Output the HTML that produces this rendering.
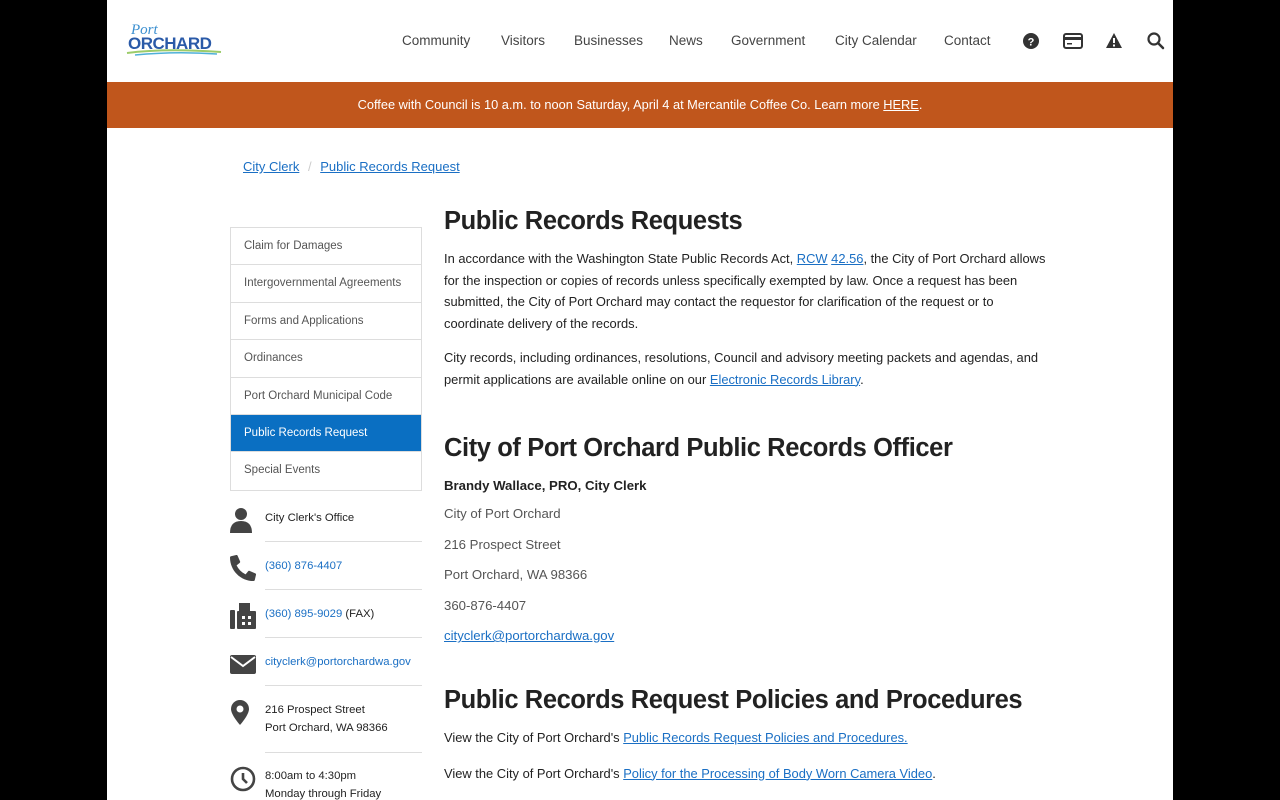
<!DOCTYPE html>
<html><head><meta charset="utf-8"><style>
*{box-sizing:border-box;margin:0;padding:0}
html,body{background:#000;font-family:"Liberation Sans",sans-serif;color:#222;width:1280px;height:800px;overflow:hidden}
.page{position:absolute;left:107px;top:0;width:1066px;height:800px;background:#fff;overflow:hidden}
.hdr{position:absolute;left:0;top:0;width:1066px;height:82px}
.nav{position:absolute;top:33px;font-size:13.5px;color:#444}
.nav span{position:absolute;white-space:nowrap}
.banner{position:absolute;top:82px;left:0;width:1066px;height:46px;background:#c0561c;color:#fff;font-size:12.8px;text-align:center;line-height:45px}
.banner u{color:#fff}
a{color:#1a6fc4;text-decoration:underline}
.bc{position:absolute;left:136px;top:159px;font-size:13px}
.menu{position:absolute;left:123px;top:227px;width:192px;border:1px solid #ddd}
.menu div{height:37.4px;line-height:37px;padding-left:13px;font-size:11.5px;color:#555;border-bottom:1px solid #ddd}
.menu div:last-child{border-bottom:none}
.menu .act{background:#0a6fc2;color:#fff}
.ct{position:absolute;left:123px;width:192px;font-size:11.3px}
.ct .ic{position:absolute;left:0}
.ct .tx{position:absolute;left:35px;line-height:18px}
.ct .ln{position:absolute;left:35px;right:0;border-top:1px solid #ddd}
.main{position:absolute;left:337px;width:612px}
h1{font-size:25.5px;font-weight:bold;color:#222;position:absolute;left:337px;letter-spacing:-0.4px;white-space:nowrap}
p{font-size:12.9px;line-height:21.5px;color:#222}
.gr{color:#555;font-size:13.2px;position:absolute;left:337px}
</style></head><body>
<div class="page">
<div class="hdr">
<svg style="position:absolute;left:18px;top:20px" width="100" height="36" viewBox="0 0 100 36">
<text x="6" y="14" font-family="Liberation Serif" font-style="italic" font-size="15" fill="#3b8fd0">Port</text>
<text x="3" y="29" font-family="Liberation Sans" font-weight="bold" font-size="17" fill="#2a5aa8" letter-spacing="-0.5">ORCHARD</text>
<path d="M2 33 Q40 28 96 32" stroke="#9ccc6a" stroke-width="2" fill="none"/>
<path d="M10 35 Q50 31 92 34" stroke="#4fb0d8" stroke-width="1.5" fill="none"/>
</svg>
<div class="nav">
<span style="left:295px">Community</span><span style="left:394px">Visitors</span><span style="left:467px">Businesses</span><span style="left:562px">News</span><span style="left:624px">Government</span><span style="left:728px">City Calendar</span><span style="left:837px">Contact</span>
</div>
<svg style="position:absolute;left:916px;top:33px" width="16" height="16"><circle cx="8" cy="8" r="8" fill="#333"/><text x="8" y="12.5" font-size="11" font-weight="bold" fill="#fff" text-anchor="middle">?</text></svg>
<svg style="position:absolute;left:956px;top:33px" width="20" height="16"><rect x="1" y="1" width="18" height="14" rx="2" fill="none" stroke="#333" stroke-width="2"/><rect x="1" y="4" width="18" height="3" fill="#333"/><rect x="4" y="10" width="5" height="1.5" fill="#333"/></svg>
<svg style="position:absolute;left:998px;top:32px" width="18" height="17"><path d="M9 1 L17 16 L1 16 Z" fill="#333"/><rect x="8" y="6" width="2" height="5" fill="#fff"/><rect x="8" y="12.5" width="2" height="2" fill="#fff"/></svg>
<svg style="position:absolute;left:1040px;top:32px" width="18" height="18"><circle cx="7" cy="7" r="5.5" fill="none" stroke="#333" stroke-width="2.2"/><path d="M11 11 L16 16" stroke="#333" stroke-width="2.5" stroke-linecap="round"/></svg>
</div>
<div class="banner">Coffee with Council is 10 a.m. to noon Saturday, April 4 at Mercantile Coffee Co. Learn more <u>HERE</u>.</div>
<div class="bc"><a>City Clerk</a> <span style="color:#ccc;margin:0 5px">/</span> <a>Public Records Request</a></div>
<div class="menu"><div>Claim for Damages</div><div>Intergovernmental Agreements</div><div>Forms and Applications</div><div>Ordinances</div><div>Port Orchard Municipal Code</div><div class="act">Public Records Request</div><div>Special Events</div></div>
<div class="ct" style="top:505px;height:300px">
<svg class="ic" style="top:2px;left:0" width="22" height="26"><circle cx="11" cy="7" r="6" fill="#444"/><path d="M0 26 Q0 14 11 14 Q22 14 22 26Z" fill="#444"/></svg>
<div class="tx" style="top:4px;color:#222">City Clerk's Office</div>
<div class="ln" style="top:36px"></div>
<svg class="ic" style="top:50px" width="26" height="26" viewBox="0 0 512 512"><path fill="#444" d="M497 361l-112-48a24 24 0 0 0-28 7l-50 61A371 371 0 0 1 130 204l61-50a24 24 0 0 0 7-28L150 14a24 24 0 0 0-27-14L19 24A24 24 0 0 0 0 48c0 257 208 464 464 464a24 24 0 0 0 24-19l24-104a24 24 0 0 0-15-28z"/></svg>
<div class="tx" style="top:52px"><a style="text-decoration:none">(360) 876-4407</a></div>
<div class="ln" style="top:84px"></div>
<svg class="ic" style="top:98px" width="26" height="26"><rect x="0" y="7" width="5" height="19" rx="1" fill="#444"/><rect x="7" y="8" width="19" height="18" rx="1" fill="#444"/><rect x="9" y="0" width="11" height="9" fill="#444"/><g fill="#fff"><rect x="12" y="13" width="3" height="3"/><rect x="18" y="13" width="3" height="3"/><rect x="12" y="19" width="3" height="3"/><rect x="18" y="19" width="3" height="3"/></g></svg>
<div class="tx" style="top:100px"><a style="text-decoration:none">(360) 895-9029</a> (FAX)</div>
<div class="ln" style="top:132px"></div>
<svg class="ic" style="top:150px" width="26" height="19"><rect width="26" height="19" rx="2" fill="#444"/><path d="M1 2 L13 11 L25 2" stroke="#fff" stroke-width="2" fill="none"/></svg>
<div class="tx" style="top:148px"><a style="text-decoration:none">cityclerk@portorchardwa.gov</a></div>
<div class="ln" style="top:180px"></div>
<svg class="ic" style="top:195px;left:1px" width="18" height="25"><path d="M9 0 A9 9 0 0 1 18 9 C18 15 9 25 9 25 C9 25 0 15 0 9 A9 9 0 0 1 9 0Z" fill="#444"/><circle cx="9" cy="9" r="3.5" fill="#fff"/></svg>
<div class="tx" style="top:196px">216 Prospect Street<br>Port Orchard, WA 98366</div>
<div class="ln" style="top:247px"></div>
<svg class="ic" style="top:261px" width="26" height="26"><circle cx="13" cy="13" r="11" fill="none" stroke="#444" stroke-width="2.6"/><path d="M13 7 V13 L17 17" stroke="#444" stroke-width="2.6" fill="none"/></svg>
<div class="tx" style="top:262px">8:00am to 4:30pm<br>Monday through Friday</div>
</div>
<h1 style="top:207px">Public Records Requests</h1>
<div class="main" style="top:248px"><p>In accordance with the Washington State Public Records Act, <a>RCW</a> <a>42.56</a>, the City of Port Orchard allows for the inspection or copies of records unless specifically exempted by law. Once a request has been submitted, the City of Port Orchard may contact the requestor for clarification of the request or to coordinate delivery of the records.</p>
<p style="margin-top:13px">City records, including ordinances, resolutions, Council and advisory meeting packets and agendas, and permit applications are available online on our <a>Electronic Records Library</a>.</p></div>
<h1 style="top:434px">City of Port Orchard Public Records Officer</h1>
<div class="main" style="top:475px"><p style="font-weight:bold;font-size:13.2px">Brandy Wallace, PRO, City Clerk</p></div>
<div class="gr" style="top:506px">City of Port Orchard</div>
<div class="gr" style="top:537px">216 Prospect Street</div>
<div class="gr" style="top:567px">Port Orchard, WA 98366</div>
<div class="gr" style="top:598px">360-876-4407</div>
<div class="gr" style="top:628px"><a>cityclerk@portorchardwa.gov</a></div>
<h1 style="top:686px">Public Records Request Policies and Procedures</h1>
<div class="main" style="top:727px"><p>View the City of Port Orchard's <a>Public Records Request Policies and Procedures.</a></p>
<p style="margin-top:14px">View the City of Port Orchard's <a>Policy for the Processing of Body Worn Camera Video</a>.</p></div>
</div>
</body></html>
